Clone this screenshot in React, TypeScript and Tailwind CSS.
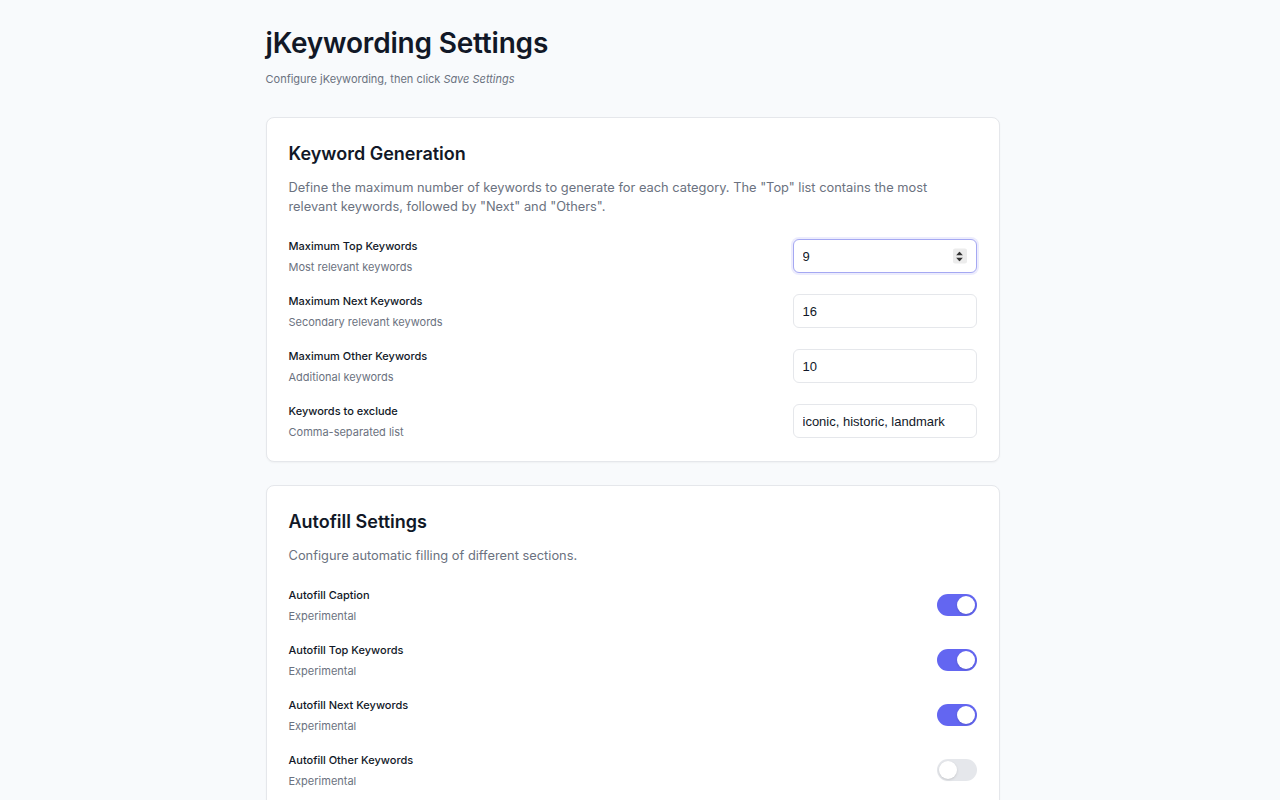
import { useState } from "react";

type NumberRow = { label: string; hint: string; value: string; focused?: boolean };
type ToggleRow = { label: string; hint: string; on: boolean };

const keywordRows: NumberRow[] = [
  { label: "Maximum Top Keywords", hint: "Most relevant keywords", value: "9", focused: true },
  { label: "Maximum Next Keywords", hint: "Secondary relevant keywords", value: "16" },
  { label: "Maximum Other Keywords", hint: "Additional keywords", value: "10" },
  { label: "Keywords to exclude", hint: "Comma-separated list", value: "iconic, historic, landmark" },
];

const autofillRows: ToggleRow[] = [
  { label: "Autofill Caption", hint: "Experimental", on: true },
  { label: "Autofill Top Keywords", hint: "Experimental", on: true },
  { label: "Autofill Next Keywords", hint: "Experimental", on: true },
  { label: "Autofill Other Keywords", hint: "Experimental", on: false },
  { label: "Autofill Categories", hint: "Experimental", on: false },
];

function Spinner() {
  return (
    <div className="pointer-events-none absolute right-[10px] top-1/2 flex h-[15px] w-[14px] -translate-y-1/2 flex-col items-center justify-center gap-[2px] rounded-[2px] bg-[#ececec]">
      <svg width="7" height="4" viewBox="0 0 7 4"><path d="M3.5 0L7 4H0z" fill="#333" /></svg>
      <svg width="7" height="4" viewBox="0 0 7 4"><path d="M0 0h7L3.5 4z" fill="#333" /></svg>
    </div>
  );
}

function RowLabel({ label, hint }: { label: string; hint: string }) {
  return (
    <div>
      <p className="text-[11px] font-medium leading-4 text-[#111827]">{label}</p>
      <p className="mt-[5px] text-[11px] leading-4 text-[#6b7280]">{hint}</p>
    </div>
  );
}

function Toggle({ on }: { on: boolean }) {
  const [checked, setChecked] = useState(on);
  return (
    <button
      type="button"
      onClick={() => setChecked(!checked)}
      className={
        checked
          ? "mt-[7px] flex h-[22px] w-[40px] items-center justify-end rounded-full bg-[#6366f1] px-[2px]"
          : "mt-[7px] flex h-[22px] w-[40px] items-center justify-start rounded-full bg-[#e5e7eb] px-[2px]"
      }
    >
      <span className="h-[18px] w-[18px] rounded-full bg-white shadow-sm" />
    </button>
  );
}

function Card({ title, description, children }: { title: string; description: React.ReactNode; children: React.ReactNode }) {
  return (
    <section className="rounded-lg border border-[#e5e7eb] bg-white px-[22px] pb-[21px] pt-[22px] shadow-[0_1px_2px_rgba(0,0,0,0.04)]">
      <h2 className="text-[18px] font-semibold leading-7 text-[#111827]">{title}</h2>
      <p className="mt-[10px] text-[12.85px] leading-[19px] text-[#6b7280]">{description}</p>
      <div className="mt-[22px] flex flex-col gap-[18px]">{children}</div>
    </section>
  );
}

export default function App() {
  return (
    // right padding stands in for the scrollbar gutter the reference page had
    <div className="min-h-screen bg-[#f8fafc] pr-[15px] font-['Inter',sans-serif]">
      <div className="mx-auto w-[734px] pb-10 pt-[25px]">
        <h1 className="text-[28px] font-semibold leading-9 tracking-[-0.2px] text-[#111827]">jKeywording Settings</h1>
        <p className="mt-[10px] text-[11px] leading-4 text-[#6b7280]">
          Configure jKeywording, then click <em>Save Settings</em>
        </p>

        <div className="mt-[30px] flex flex-col gap-[23px]">
          <Card
            title="Keyword Generation"
            description={
              <>
                Define the maximum number of keywords to generate for each category. The "Top" list contains the most
                relevant keywords, followed by "Next" and "Others".
              </>
            }
          >
            {keywordRows.map(row => (
              <div key={row.label} className="flex items-start justify-between">
                <RowLabel label={row.label} hint={row.hint} />
                <div className="relative mt-[1px]">
                  <input
                    defaultValue={row.value}
                    className={
                      row.focused
                        ? "h-[34px] w-[184px] rounded-md border border-[#a5a8f2] bg-white px-[9px] font-['Liberation_Sans',Arial,sans-serif] text-[13px] text-[#111827] shadow-[0_0_0_2px_rgba(99,102,241,0.12)] outline-none"
                        : "h-[34px] w-[184px] rounded-md border border-[#e5e7eb] bg-white px-[9px] font-['Liberation_Sans',Arial,sans-serif] text-[13px] text-[#111827] outline-none"
                    }
                  />
                  {row.focused && <Spinner />}
                </div>
              </div>
            ))}
          </Card>

          <Card title="Autofill Settings" description="Configure automatic filling of different sections.">
            {autofillRows.map(row => (
              <div key={row.label} className="flex items-start justify-between">
                <RowLabel label={row.label} hint={row.hint} />
                <Toggle on={row.on} />
              </div>
            ))}
          </Card>
        </div>
      </div>
    </div>
  );
}
